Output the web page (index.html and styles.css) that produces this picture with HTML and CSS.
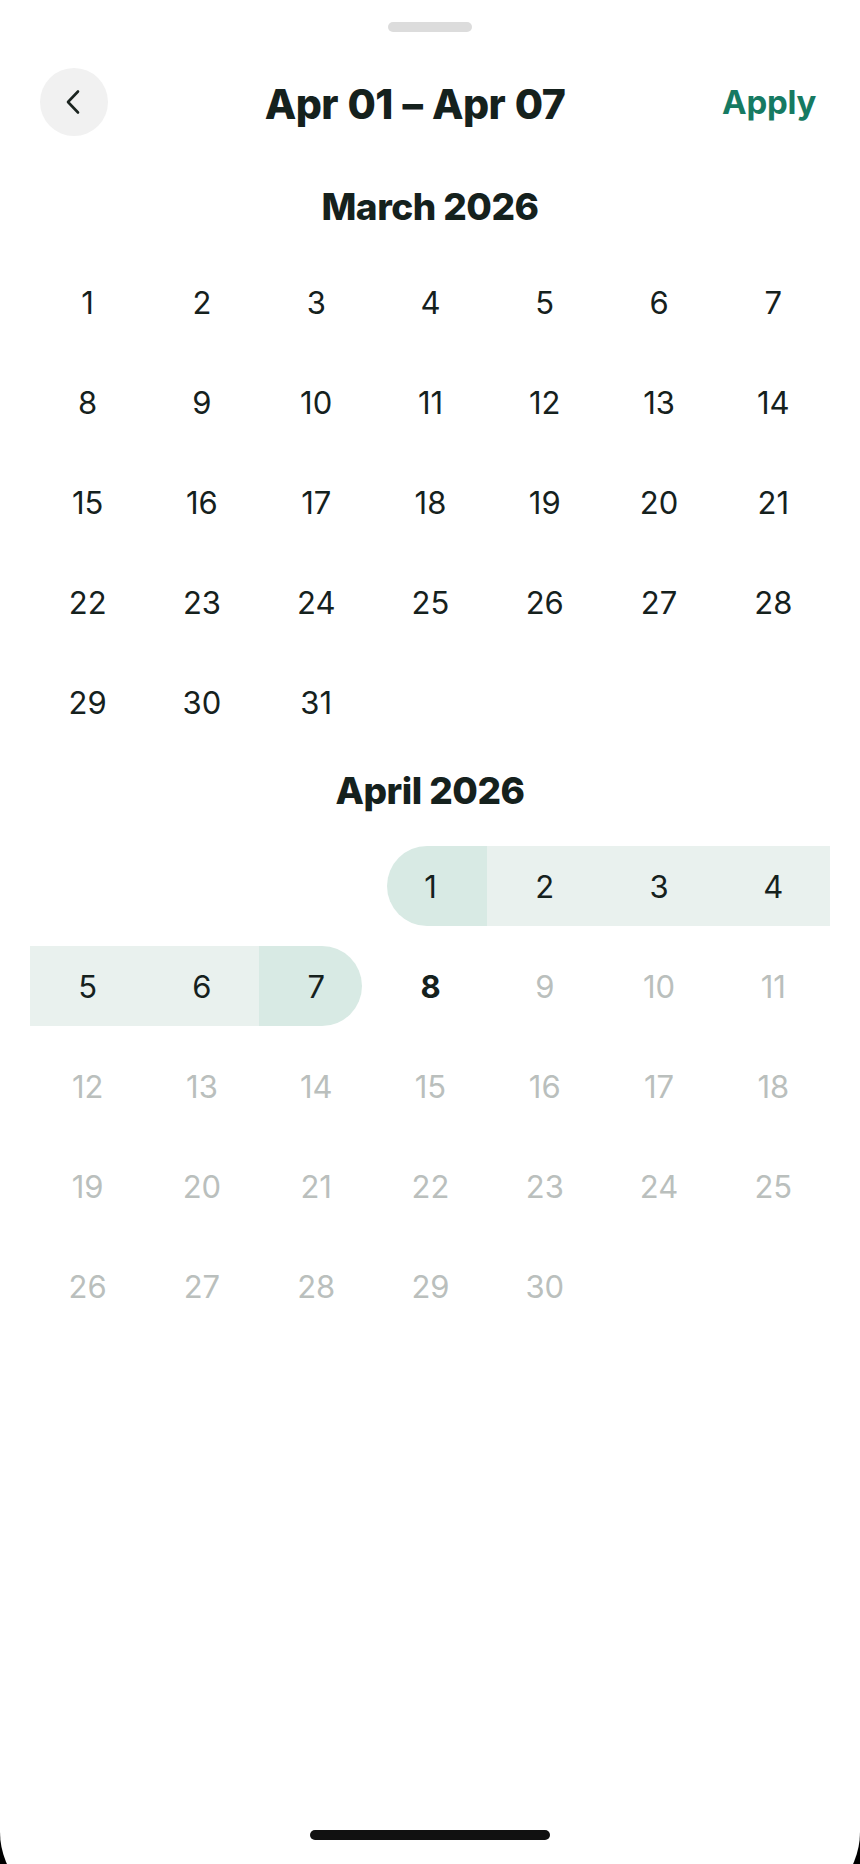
FILE: index.html
```html
<!DOCTYPE html>
<html>
<head>
<meta charset="utf-8">
<link rel="stylesheet" href="styles.css">
</head>
<body>
<div class="screen">
  <div class="grabber"></div>
  <div class="header">
    <div class="back">
      <svg width="20" height="26" viewBox="0 0 20 26"><path d="M15 2.5 L5 13 L15 23.5" fill="none" stroke="#1b2420" stroke-width="2.6" stroke-linecap="round" stroke-linejoin="round"/></svg>
    </div>
    <div class="title">Apr 01 – Apr 07</div>
    <div class="apply">Apply</div>
  </div>

  <div class="month-title first">March 2026</div>
  <div class="grid">
    <div class="day"><span>1</span></div><div class="day"><span>2</span></div><div class="day"><span>3</span></div><div class="day"><span>4</span></div><div class="day"><span>5</span></div><div class="day"><span>6</span></div><div class="day"><span>7</span></div>
    <div class="day"><span>8</span></div><div class="day"><span>9</span></div><div class="day"><span>10</span></div><div class="day"><span>11</span></div><div class="day"><span>12</span></div><div class="day"><span>13</span></div><div class="day"><span>14</span></div>
    <div class="day"><span>15</span></div><div class="day"><span>16</span></div><div class="day"><span>17</span></div><div class="day"><span>18</span></div><div class="day"><span>19</span></div><div class="day"><span>20</span></div><div class="day"><span>21</span></div>
    <div class="day"><span>22</span></div><div class="day"><span>23</span></div><div class="day"><span>24</span></div><div class="day"><span>25</span></div><div class="day"><span>26</span></div><div class="day"><span>27</span></div><div class="day"><span>28</span></div>
    <div class="day"><span>29</span></div><div class="day"><span>30</span></div><div class="day"><span>31</span></div>
  </div>

  <div class="month-title">April 2026</div>
  <div class="grid">
    <div class="day"></div><div class="day"></div><div class="day"></div>
    <div class="day"><span class="start">1</span></div><div class="day"><span class="mid">2</span></div><div class="day"><span class="mid">3</span></div><div class="day"><span class="mid">4</span></div>
    <div class="day"><span class="mid">5</span></div><div class="day"><span class="mid">6</span></div><div class="day"><span class="end">7</span></div><div class="day today"><span>8</span></div><div class="day off"><span>9</span></div><div class="day off"><span>10</span></div><div class="day off"><span>11</span></div>
    <div class="day off"><span>12</span></div><div class="day off"><span>13</span></div><div class="day off"><span>14</span></div><div class="day off"><span>15</span></div><div class="day off"><span>16</span></div><div class="day off"><span>17</span></div><div class="day off"><span>18</span></div>
    <div class="day off"><span>19</span></div><div class="day off"><span>20</span></div><div class="day off"><span>21</span></div><div class="day off"><span>22</span></div><div class="day off"><span>23</span></div><div class="day off"><span>24</span></div><div class="day off"><span>25</span></div>
    <div class="day off"><span>26</span></div><div class="day off"><span>27</span></div><div class="day off"><span>28</span></div><div class="day off"><span>29</span></div><div class="day off"><span>30</span></div>
  </div>

  <div class="home-indicator"></div>
</div>
</body>
</html>
```

FILE: styles.css
```css
html, body {
  margin: 0;
  padding: 0;
  background: #000;
  overflow: hidden;
  height: 1864px;
}
.screen {
  position: relative;
  width: 860px;
  height: 1909px;
  background: #fff;
  border-radius: 0 0 77px 77px;
  font-family: Inter, "Noto Sans", sans-serif;
  color: #15211d;
  overflow: hidden;
}
.grabber {
  width: 84px;
  height: 10px;
  margin: 22px auto 0;
  border-radius: 5px;
  background: #dcdcdc;
}
.header {
  display: flex;
  align-items: center;
  height: 68px;
  margin-top: 36px;
  padding: 0 44px 0 40px;
}
.back {
  width: 68px;
  height: 68px;
  border-radius: 50%;
  background: #f1f1f1;
  display: flex;
  align-items: center;
  justify-content: center;
  padding-right: 3px;
  box-sizing: border-box;
}
.title {
  flex: 1;
  text-align: center;
  font-size: 41px;
  font-weight: 800;
  letter-spacing: -0.5px;
  word-spacing: 1px;
  padding-top: 4px;
}
.apply {
  font-size: 33px;
  font-weight: 700;
  color: #167a62;
  letter-spacing: -0.3px;
}
.month-title {
  height: 50px;
  line-height: 50px;
  text-align: center;
  font-size: 37px;
  font-weight: 800;
  letter-spacing: -0.5px;
  margin-top: 14px;
}
.month-title.first {
  margin-top: 46px;
}
.grid {
  display: grid;
  grid-template-columns: repeat(7, 1fr);
  margin: 20px 30px 0;
}
.day {
  height: 100px;
  padding: 10px 0;
  box-sizing: border-box;
  font-size: 31px;
  font-weight: 400;
}
.day span {
  display: flex;
  align-items: center;
  justify-content: center;
  height: 80px;
  padding-left: 1px;
}
.day span.mid {
  background: #e9f1ee;
}
.day span.start {
  background: #d8eae4;
  margin-left: 14px;
  padding-left: 0;
  padding-right: 13px;
  border-radius: 40px 0 0 40px;
}
.day span.end {
  background: #d8eae4;
  margin-right: 11px;
  padding-left: 12px;
  border-radius: 0 40px 40px 0;
}
.day.today {
  font-weight: 700;
}
.day.off {
  color: #babfbd;
}
.home-indicator {
  position: absolute;
  left: 310px;
  top: 1830px;
  width: 240px;
  height: 10px;
  border-radius: 5px;
  background: #111;
}
```
